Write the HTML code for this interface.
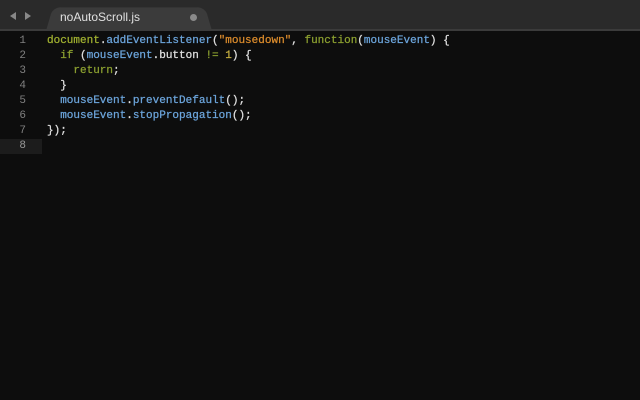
<!DOCTYPE html>
<html><head><style>
html,body{margin:0;padding:0;width:640px;height:400px;background:#0d0d0d;overflow:hidden}
#bar{position:absolute;left:0;top:0;width:640px;height:29px;background:#2a2a2a;border-bottom:2px solid #3b3b3b}
#tab{position:absolute;left:46px;top:5px;width:166px;height:26px;background:#3b3b3b;border-radius:8px 8px 0 0;transform:perspective(40px) rotateX(8deg);transform-origin:bottom}
#tabt{position:absolute;left:60px;top:10px;color:#e0e0e0;font:12px "Liberation Sans",sans-serif}
#dot{position:absolute;left:190px;top:14px;width:7px;height:7px;border-radius:50%;background:#8a8a8a}
.arr{position:absolute;top:12px;width:0;height:0;border-top:4px solid transparent;border-bottom:4px solid transparent}
#code{position:absolute;left:0;top:34px;width:640px;font:11px/15px "Liberation Mono",monospace;color:#e0e0e0;-webkit-text-stroke:0.25px}
.l{height:15px;white-space:pre;position:relative}
.n{display:inline-block;width:26px;text-align:right;color:#808080;margin-right:21px;-webkit-text-stroke:0}
.g{color:#a0b030}.b{color:#6ca5dc}.o{color:#dc8c2c}.y{color:#c8b040}.fn{color:#8ca030}
.cur{background:#1c1c1c;width:42px}
</style></head><body>
<div id="bar"></div>
<div class="arr" style="left:10px;border-right:6px solid #888"></div>
<div class="arr" style="left:25px;border-left:6px solid #888"></div>
<div id="tab"></div>
<div id="tabt">noAutoScroll.js</div>
<div id="dot"></div>
<div id="code">
<div class="l"><span class="n">1</span><span class="g">document</span>.<span class="b">addEventListener</span>(<span class="o">"mousedown"</span>, <span class="fn">function</span>(<span class="b">mouseEvent</span>) {</div>
<div class="l"><span class="n">2</span>  <span class="fn">if</span> (<span class="b">mouseEvent</span>.button <span class="fn">!=</span> <span class="y">1</span>) {</div>
<div class="l"><span class="n">3</span>    <span class="fn">return</span>;</div>
<div class="l"><span class="n">4</span>  }</div>
<div class="l"><span class="n">5</span>  <span class="b">mouseEvent</span>.<span class="b">preventDefault</span>();</div>
<div class="l"><span class="n">6</span>  <span class="b">mouseEvent</span>.<span class="b">stopPropagation</span>();</div>
<div class="l"><span class="n">7</span>});</div>
<div class="l cur"><span class="n" style="color:#999">8</span></div>
</div>
</body></html>
